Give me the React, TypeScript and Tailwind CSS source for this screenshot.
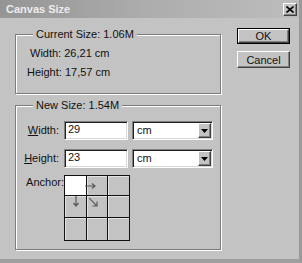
import React from 'react';

const raised =
  'border border-t-white border-l-white border-b-[#404040] border-r-[#404040] shadow-[inset_-1px_-1px_0_#808080]';
const sunken =
  'border border-t-[#808080] border-l-[#808080] border-b-white border-r-white shadow-[inset_1px_1px_0_#202020,inset_-1px_-1px_0_#d8d8d8]';

function GroupBox({
  title,
  className,
  children,
}: {
  title: string;
  className: string;
  children: React.ReactNode;
}) {
  return (
    <div
      className={`relative border border-[#7c7c7c] shadow-[inset_1px_1px_0_#fff,1px_1px_0_#fff] ${className}`}
    >
      <span className="absolute -top-[7px] left-[17px] bg-[#c3c3c3] px-[3px] leading-[13px] text-[#111]">
        {title}
      </span>
      {children}
    </div>
  );
}

function Field({ value }: { value: string }) {
  return (
    <div
      className={`w-[64px] h-[19px] bg-white pl-[3px] leading-[15px] text-[#111] ${sunken}`}
    >
      {value}
    </div>
  );
}

function UnitSelect() {
  return (
    <div
      className={`ml-[4px] w-[81px] h-[19px] bg-white flex items-stretch ${sunken}`}
    >
      <span className="flex-1 pl-[4px] leading-[16px] text-[#111]">cm</span>
      <div
        className={`w-[13px] m-[1px] bg-[#c3c3c3] flex items-center justify-center ${raised}`}
      >
        <svg width="7" height="4" viewBox="0 0 7 4">
          <path d="M0 0h7L3.5 4z" fill="#000" />
        </svg>
      </div>
    </div>
  );
}

function Arrow({ dir }: { dir: 'right' | 'down' | 'diag' }) {
  if (dir === 'right')
    return (
      <svg width="12" height="6" viewBox="0 0 12 6" className="absolute left-[-2px] top-[7px]">
        <path d="M0 3h10M7 0.5l3 2.5-3 2.5" stroke="#5a5a5a" strokeWidth="1.2" fill="none" />
      </svg>
    );
  if (dir === 'down')
    return (
      <svg width="6" height="12" viewBox="0 0 6 12" className="absolute left-[8px] top-[0px]">
        <path d="M3 0v10M0.5 7l2.5 3 2.5-3" stroke="#5a5a5a" strokeWidth="1.2" fill="none" />
      </svg>
    );
  return (
    <svg width="9" height="9" viewBox="0 0 9 9" className="absolute left-[2px] top-[2px]">
      <path d="M0 0l8 8M3.5 8h4.5v-4.5" stroke="#5a5a5a" strokeWidth="1.2" fill="none" />
    </svg>
  );
}

function AnchorGrid() {
  const cells = [0, 1, 2, 3, 4, 5, 6, 7, 8];
  return (
    <div className="grid grid-cols-[21px_20px_21px] grid-rows-[19px_21px_22px] gap-px bg-[#111] border border-[#111]">
      {cells.map((i) => (
        <div
          key={i}
          className={`relative ${
            i === 0 ? 'bg-white' : 'bg-[#c3c3c3] shadow-[inset_1px_1px_0_#e2e2e2]'
          }`}
        >
          {i === 1 && <Arrow dir="right" />}
          {i === 3 && <Arrow dir="down" />}
          {i === 4 && <Arrow dir="diag" />}
        </div>
      ))}
    </div>
  );
}

export default function App() {
  return (
    <div
      className="w-[302px] h-[263px] overflow-hidden bg-[#c3c3c3] text-[11px] text-[#111] border-r-[3px] border-b-[4px] border-r-[#9a9a9a] border-b-[#a0a0a0]"
      style={{ fontFamily: '"Liberation Sans", Arial, sans-serif' }}
    >
      {/* title bar */}
      <div className="h-[18px] flex items-center justify-between pl-[6px] pr-[2px] bg-gradient-to-r from-[#959595] via-[#adadad] to-[#bdbdbd]">
        <span className="font-bold text-[#ececec] leading-[13px]">Canvas Size</span>
        <div
          className={`w-[14px] h-[13px] bg-[#c3c3c3] flex items-center justify-center ${raised}`}
        >
          <svg width="8" height="7" viewBox="0 0 8 7">
            <path d="M0.5 0.5l7 6M7.5 0.5l-7 6" stroke="#000" strokeWidth="1.6" />
          </svg>
        </div>
      </div>

      <div className="flex">
        {/* left column */}
        <div className="pl-[15px] pt-[16px] flex flex-col">
          <GroupBox title="Current Size: 1.06M" className="w-[206px] h-[60px]">
            <div className="flex flex-col pt-[12px] leading-[13px] gap-[6px]">
              <span className="pl-[14px]">Width: 26,21 cm</span>
              <span className="pl-[11px]">Height: 17,57 cm</span>
            </div>
          </GroupBox>

          <GroupBox title="New Size: 1.54M" className="mt-[11px] w-[206px] h-[145px]">
            <div className="flex flex-col pt-[15px]">
              <div className="flex items-center">
                <span className="w-[45px] text-right pr-[2px]">
                  <u>W</u>idth:
                </span>
                <span className="w-[3px]" />
                <Field value="29" />
                <UnitSelect />
              </div>
              <div className="flex items-center mt-[9px]">
                <span className="w-[45px] text-right pr-[2px]">
                  <u>H</u>eight:
                </span>
                <span className="w-[3px]" />
                <Field value="23" />
                <UnitSelect />
              </div>
              <div className="flex mt-[7px]">
                <span className="w-[48px] text-right leading-[13px] pt-[1px]">Anchor:</span>
                <AnchorGrid />
              </div>
            </div>
          </GroupBox>
        </div>

        {/* buttons */}
        <div className="ml-[16px] pt-[10px] flex flex-col">
          <div className="w-[53px] h-[16px] border border-black">
            <div
              className={`w-full h-full bg-[#c3c3c3] flex items-center justify-center leading-[12px] ${raised}`}
            >
              OK
            </div>
          </div>
          <div
            className={`mt-[7px] w-[53px] h-[17px] bg-[#c3c3c3] flex items-center justify-center leading-[12px] ${raised}`}
          >
            Cancel
          </div>
        </div>
      </div>
    </div>
  );
}
